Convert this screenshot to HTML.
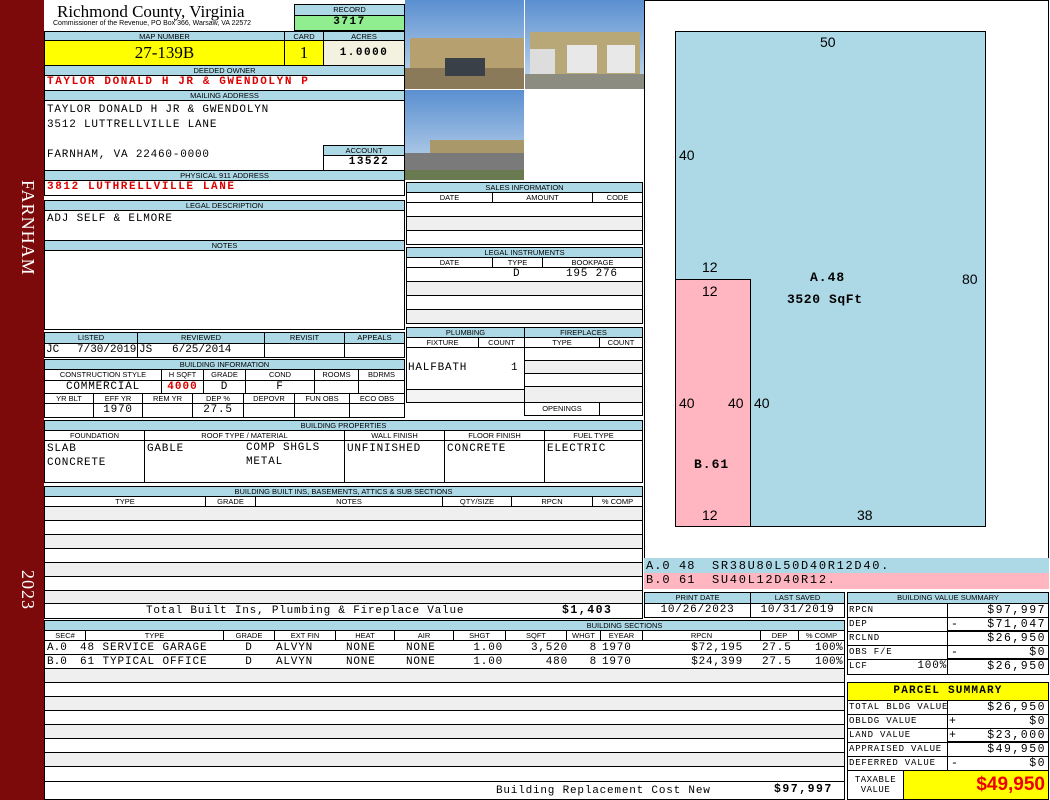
<!DOCTYPE html>
<html><head><meta charset="utf-8"><style>
*{box-sizing:border-box;margin:0;padding:0}
body{width:1050px;height:800px;position:relative;background:#fff;overflow:hidden;font-family:"Liberation Sans",sans-serif}
div{position:absolute}
.bd{border:1px solid #000}
.b{background:#add8e6;border:1px solid #000;font-size:7.5px;text-align:center;line-height:9px;color:#000;white-space:nowrap;overflow:hidden}
.h{border:1px solid #000;font-size:7.5px;text-align:center;line-height:9px;white-space:nowrap;overflow:hidden}
.m{font-family:"Liberation Mono",monospace;font-size:11px;white-space:nowrap;line-height:13px;letter-spacing:0.8px}
.r{color:#d00;font-weight:bold;letter-spacing:1.6px}
.g{background:#efefef}
.c{text-align:center}
.rt{text-align:right}
.v{font-size:11.5px;letter-spacing:1.5px}
</style></head><body>
<div style="left:0;top:0;width:44px;height:800px;background:#7d0a0a"></div>
<div style="left:8px;top:180px;width:30px;height:120px;color:#fff;font-family:'Liberation Serif',serif;font-size:18px;writing-mode:vertical-rl;letter-spacing:1px">FARNHAM</div>
<div style="left:8px;top:570px;width:30px;height:60px;color:#fff;font-family:'Liberation Serif',serif;font-size:18px;writing-mode:vertical-rl;letter-spacing:1px">2023</div>

<div style="left:57px;top:2px;font-family:'Liberation Serif',serif;font-size:17px;line-height:20px">Richmond County, Virginia</div>
<div style="left:53px;top:20px;font-size:7px;line-height:8px;white-space:nowrap">Commissioner of the Revenue, PO Box 366, Warsaw, VA 22572</div>
<div class="b" style="left:294px;top:4px;width:111px;height:12px">RECORD</div>
<div class="m c bd" style="left:294px;top:15px;width:111px;height:16px;background:#90ee90;font-weight:bold;letter-spacing:1.5px">3717</div>
<div class="b" style="left:44px;top:31px;width:241px;height:10px">MAP NUMBER</div>
<div class="b" style="left:284px;top:31px;width:40px;height:10px">CARD</div>
<div class="b" style="left:323px;top:31px;width:82px;height:10px">ACRES</div>
<div class="bd c" style="left:44px;top:40px;width:241px;height:26px;background:#ffff00;font-family:'Liberation Serif',serif;font-size:17px;line-height:24px">27-139B</div>
<div class="bd c" style="left:284px;top:40px;width:40px;height:26px;background:#ffff00;font-family:'Liberation Serif',serif;font-size:17px;line-height:24px">1</div>
<div class="bd m c" style="left:323px;top:40px;width:82px;height:26px;background:#f3f1e0;font-weight:bold;line-height:24px;letter-spacing:1.5px">1.0000</div>
<div class="b" style="left:44px;top:65px;width:361px;height:11px">DEEDED OWNER</div>
<div class="bd m r" style="left:44px;top:75px;width:361px;height:16px;padding-left:2px">TAYLOR DONALD H JR &amp; GWENDOLYN P</div>
<div class="b" style="left:44px;top:90px;width:361px;height:11px">MAILING ADDRESS</div>
<div class="bd m" style="left:44px;top:100px;width:361px;height:71px;padding:2px 2px;line-height:15px">TAYLOR DONALD H JR &amp; GWENDOLYN<br>3512 LUTTRELLVILLE LANE<br><br>FARNHAM, VA 22460-0000</div>
<div class="b" style="left:323px;top:145px;width:82px;height:11px">ACCOUNT</div>
<div class="bd m c" style="left:323px;top:155px;width:82px;height:16px;font-weight:bold;padding-left:10px;letter-spacing:1.5px">13522</div>
<div class="b" style="left:44px;top:170px;width:361px;height:11px">PHYSICAL 911 ADDRESS</div>
<div class="bd m r" style="left:44px;top:180px;width:361px;height:16px;padding-left:2px">3812 LUTHRELLVILLE LANE</div>
<div class="b" style="left:44px;top:200px;width:361px;height:11px">LEGAL DESCRIPTION</div>
<div class="bd m" style="left:44px;top:210px;width:361px;height:31px;padding:2px">ADJ SELF &amp; ELMORE</div>
<div class="b" style="left:44px;top:240px;width:361px;height:11px">NOTES</div>
<div class="bd" style="left:44px;top:250px;width:361px;height:80px"></div>

<div class="b" style="left:44px;top:332px;width:94px;height:12px">LISTED</div>
<div class="b" style="left:137px;top:332px;width:128px;height:12px">REVIEWED</div>
<div class="b" style="left:264px;top:332px;width:81px;height:12px">REVISIT</div>
<div class="b" style="left:344px;top:332px;width:61px;height:12px">APPEALS</div>
<div class="bd" style="left:44px;top:343px;width:94px;height:15px"></div>
<div class="bd" style="left:137px;top:343px;width:128px;height:15px"></div>
<div class="m" style="left:46px;top:344px;letter-spacing:0">JC</div>
<div class="m" style="left:77px;top:344px;letter-spacing:0">7/30/2019</div>
<div class="m" style="left:139px;top:344px;letter-spacing:0">JS</div>
<div class="m" style="left:172px;top:344px;letter-spacing:0">6/25/2014</div>
<div class="bd" style="left:264px;top:343px;width:81px;height:15px"></div>
<div class="bd" style="left:344px;top:343px;width:61px;height:15px"></div>
<div class="b" style="left:44px;top:359px;width:361px;height:11px">BUILDING INFORMATION</div>
<div class="h" style="left:44px;top:369px;width:118px;height:12px">CONSTRUCTION STYLE</div>
<div class="h" style="left:161px;top:369px;width:43px;height:12px">H SQFT</div>
<div class="h" style="left:203px;top:369px;width:43px;height:12px">GRADE</div>
<div class="h" style="left:245px;top:369px;width:70px;height:12px">COND</div>
<div class="h" style="left:314px;top:369px;width:45px;height:12px">ROOMS</div>
<div class="h" style="left:358px;top:369px;width:47px;height:12px">BDRMS</div>
<div class="bd m c" style="left:44px;top:380px;width:118px;height:14px">COMMERCIAL</div>
<div class="bd m c r" style="left:161px;top:380px;width:43px;height:14px;letter-spacing:1px">4000</div>
<div class="bd m c" style="left:203px;top:380px;width:43px;height:14px">D</div>
<div class="bd m c" style="left:245px;top:380px;width:70px;height:14px">F</div>
<div class="bd" style="left:314px;top:380px;width:45px;height:14px"></div>
<div class="bd" style="left:358px;top:380px;width:47px;height:14px"></div>
<div class="h" style="left:44px;top:393px;width:50px;height:11px">YR BLT</div>
<div class="h" style="left:93px;top:393px;width:50px;height:11px">EFF YR</div>
<div class="h" style="left:142px;top:393px;width:51px;height:11px">REM YR</div>
<div class="h" style="left:192px;top:393px;width:52px;height:11px">DEP %</div>
<div class="h" style="left:243px;top:393px;width:52px;height:11px">DEPOVR</div>
<div class="h" style="left:294px;top:393px;width:56px;height:11px">FUN OBS</div>
<div class="h" style="left:349px;top:393px;width:56px;height:11px">ECO OBS</div>
<div class="bd" style="left:44px;top:403px;width:50px;height:15px"></div>
<div class="bd m c" style="left:93px;top:403px;width:50px;height:15px">1970</div>
<div class="bd" style="left:142px;top:403px;width:51px;height:15px"></div>
<div class="bd m c" style="left:192px;top:403px;width:52px;height:15px">27.5</div>
<div class="bd" style="left:243px;top:403px;width:52px;height:15px"></div>
<div class="bd" style="left:294px;top:403px;width:56px;height:15px"></div>
<div class="bd" style="left:349px;top:403px;width:56px;height:15px"></div>

<svg style="position:absolute;left:405px;top:0" width="240" height="181">
<defs><linearGradient id="sk" x1="0" y1="0" x2="0" y2="1"><stop offset="0" stop-color="#5a8fd0"/><stop offset="1" stop-color="#c8dcee"/></linearGradient></defs>
<rect x="0" y="0" width="119" height="89" fill="url(#sk)"/>
<rect x="5" y="38" width="114" height="32" fill="#b7a070"/><rect x="0" y="68" width="119" height="21" fill="#8a7a5a"/><rect x="40" y="58" width="40" height="18" fill="#3a4048"/>
<rect x="120" y="0" width="119" height="89" fill="url(#sk)"/>
<rect x="125" y="32" width="110" height="42" fill="#b8a878"/><rect x="162" y="45" width="30" height="28" fill="#e8e8e8"/><rect x="202" y="45" width="28" height="28" fill="#e8e8e8"/><rect x="125" y="49" width="25" height="30" fill="#ddd"/><rect x="120" y="74" width="119" height="15" fill="#8c8c80"/>
<rect x="0" y="90" width="119" height="90" fill="url(#sk)"/>
<rect x="25" y="140" width="94" height="18" fill="#a8986a"/><rect x="0" y="153" width="119" height="20" fill="#7a7a7a"/><rect x="0" y="170" width="119" height="10" fill="#6a7a50"/>
</svg>

<div class="b" style="left:406px;top:182px;width:237px;height:11px">SALES INFORMATION</div>
<div class="h" style="left:406px;top:192px;width:87px;height:11px">DATE</div>
<div class="h" style="left:492px;top:192px;width:101px;height:11px">AMOUNT</div>
<div class="h" style="left:592px;top:192px;width:51px;height:11px">CODE</div>
<div class="bd" style="left:406px;top:202px;width:237px;height:15px"></div>
<div class="bd g" style="left:406px;top:216px;width:237px;height:15px"></div>
<div class="bd" style="left:406px;top:230px;width:237px;height:15px"></div>
<div class="b" style="left:406px;top:247px;width:237px;height:11px">LEGAL INSTRUMENTS</div>
<div class="h" style="left:406px;top:257px;width:87px;height:11px">DATE</div>
<div class="h" style="left:492px;top:257px;width:51px;height:11px">TYPE</div>
<div class="h" style="left:542px;top:257px;width:101px;height:11px">BOOKPAGE</div>
<div class="bd" style="left:406px;top:267px;width:237px;height:15px"></div>
<div class="m" style="left:513px;top:268px">D</div>
<div class="m" style="left:566px;top:268px">195 276</div>
<div class="bd g" style="left:406px;top:281px;width:237px;height:15px"></div>
<div class="bd" style="left:406px;top:295px;width:237px;height:15px"></div>
<div class="bd g" style="left:406px;top:309px;width:237px;height:15px"></div>

<div class="b" style="left:406px;top:327px;width:119px;height:11px">PLUMBING</div>
<div class="b" style="left:524px;top:327px;width:119px;height:11px">FIREPLACES</div>
<div class="h" style="left:406px;top:337px;width:73px;height:11px">FIXTURE</div>
<div class="h" style="left:478px;top:337px;width:47px;height:11px">COUNT</div>
<div class="h" style="left:524px;top:337px;width:76px;height:11px">TYPE</div>
<div class="h" style="left:599px;top:337px;width:44px;height:11px">COUNT</div>
<div class="bd" style="left:406px;top:347px;width:119px;height:56px"></div>
<div class="m" style="left:408px;top:362px">HALFBATH</div>
<div class="m" style="left:511px;top:362px">1</div>
<div class="bd" style="left:406px;top:389px;width:119px;height:14px;background:#f3f3f3"></div>
<div class="bd" style="left:524px;top:347px;width:119px;height:14px"></div>
<div class="bd g" style="left:524px;top:360px;width:119px;height:14px"></div>
<div class="bd" style="left:524px;top:373px;width:119px;height:14px"></div>
<div class="bd g" style="left:524px;top:386px;width:119px;height:17px"></div>
<div class="h" style="left:524px;top:402px;width:76px;height:14px;line-height:12px">OPENINGS</div>
<div class="bd" style="left:599px;top:402px;width:44px;height:14px"></div>

<div class="b" style="left:44px;top:420px;width:599px;height:11px">BUILDING PROPERTIES</div>
<div class="h" style="left:44px;top:430px;width:101px;height:11px">FOUNDATION</div>
<div class="h" style="left:144px;top:430px;width:201px;height:11px">ROOF TYPE / MATERIAL</div>
<div class="h" style="left:344px;top:430px;width:101px;height:11px">WALL FINISH</div>
<div class="h" style="left:444px;top:430px;width:101px;height:11px">FLOOR FINISH</div>
<div class="h" style="left:544px;top:430px;width:99px;height:11px">FUEL TYPE</div>
<div class="bd m" style="left:44px;top:440px;width:101px;height:43px;padding:1px 2px;line-height:14px">SLAB<br>CONCRETE</div>
<div class="bd m" style="left:144px;top:440px;width:201px;height:43px;padding:1px 2px;line-height:14px">GABLE</div>
<div class="m" style="left:246px;top:441px;line-height:14px">COMP SHGLS<br>METAL</div>
<div class="bd m" style="left:344px;top:440px;width:101px;height:43px;padding:1px 2px;line-height:14px">UNFINISHED</div>
<div class="bd m" style="left:444px;top:440px;width:101px;height:43px;padding:1px 2px;line-height:14px">CONCRETE</div>
<div class="bd m" style="left:544px;top:440px;width:99px;height:43px;padding:1px 2px;line-height:14px">ELECTRIC</div>

<div class="b" style="left:44px;top:486px;width:599px;height:11px">BUILDING BUILT INS, BASEMENTS, ATTICS &amp; SUB SECTIONS</div>
<div class="h" style="left:44px;top:496px;width:162px;height:11px">TYPE</div>
<div class="h" style="left:205px;top:496px;width:51px;height:11px">GRADE</div>
<div class="h" style="left:255px;top:496px;width:188px;height:11px">NOTES</div>
<div class="h" style="left:442px;top:496px;width:70px;height:11px">QTY/SIZE</div>
<div class="h" style="left:511px;top:496px;width:82px;height:11px">RPCN</div>
<div class="h" style="left:592px;top:496px;width:51px;height:11px">% COMP</div>
<div class="bd g" style="left:44px;top:506px;width:599px;height:15px"></div>
<div class="bd" style="left:44px;top:520px;width:599px;height:15px"></div>
<div class="bd g" style="left:44px;top:534px;width:599px;height:15px"></div>
<div class="bd" style="left:44px;top:548px;width:599px;height:15px"></div>
<div class="bd g" style="left:44px;top:562px;width:599px;height:15px"></div>
<div class="bd" style="left:44px;top:576px;width:599px;height:15px"></div>
<div class="bd g" style="left:44px;top:590px;width:599px;height:14px"></div>
<div class="bd m" style="left:44px;top:603px;width:599px;height:16px;line-height:15px;padding-left:101px">Total Built Ins, Plumbing &amp; Fireplace Value</div>
<div class="m v" style="left:562px;top:604px;font-weight:bold">$1,403</div>

<div class="b" style="left:44px;top:620px;width:801px;height:11px;text-indent:360px">BUILDING SECTIONS</div>
<div class="h" style="left:44px;top:630px;width:42px;height:11px">SEC#</div>
<div class="h" style="left:85px;top:630px;width:139px;height:11px">TYPE</div>
<div class="h" style="left:223px;top:630px;width:52px;height:11px">GRADE</div>
<div class="h" style="left:274px;top:630px;width:62px;height:11px">EXT FIN</div>
<div class="h" style="left:335px;top:630px;width:60px;height:11px">HEAT</div>
<div class="h" style="left:394px;top:630px;width:60px;height:11px">AIR</div>
<div class="h" style="left:453px;top:630px;width:53px;height:11px">SHGT</div>
<div class="h" style="left:505px;top:630px;width:62px;height:11px">SQFT</div>
<div class="h" style="left:566px;top:630px;width:35px;height:11px">WHGT</div>
<div class="h" style="left:600px;top:630px;width:43px;height:11px">EYEAR</div>
<div class="h" style="left:642px;top:630px;width:119px;height:11px">RPCN</div>
<div class="h" style="left:760px;top:630px;width:39px;height:11px">DEP</div>
<div class="h" style="left:798px;top:630px;width:47px;height:11px">% COMP</div>
<div class="bd" style="left:44px;top:640px;width:801px;height:15px"></div>
<div class="bd" style="left:44px;top:654px;width:801px;height:15px"></div>
<div class="m" style="left:47px;top:641px;line-height:14px;letter-spacing:0">A.0<br>B.0</div>
<div class="m" style="left:80px;top:641px;line-height:14px;letter-spacing:0.9px">48 SERVICE GARAGE<br>61 TYPICAL OFFICE</div>
<div class="m c" style="left:223px;top:641px;width:52px;line-height:14px">D<br>D</div>
<div class="m" style="left:276px;top:641px;line-height:14px">ALVYN<br>ALVYN</div>
<div class="m" style="left:346px;top:641px;line-height:14px">NONE<br>NONE</div>
<div class="m" style="left:406px;top:641px;line-height:14px">NONE<br>NONE</div>
<div class="m rt" style="left:453px;top:641px;width:50px;line-height:14px">1.00<br>1.00</div>
<div class="m rt" style="left:505px;top:641px;width:63px;line-height:14px">3,520<br>480</div>
<div class="m rt" style="left:566px;top:641px;width:31px;line-height:14px">8<br>8</div>
<div class="m" style="left:602px;top:641px;line-height:14px">1970<br>1970</div>
<div class="m rt" style="left:642px;top:641px;width:101px;line-height:14px">$72,195<br>$24,399</div>
<div class="m" style="left:762px;top:641px;line-height:14px">27.5<br>27.5</div>
<div class="m rt" style="left:791px;top:641px;width:52px;line-height:14px;letter-spacing:0.4px">100%<br>100%</div>
<div class="bd g" style="left:44px;top:668px;width:801px;height:15px"></div>
<div class="bd" style="left:44px;top:682px;width:801px;height:15px"></div>
<div class="bd g" style="left:44px;top:696px;width:801px;height:15px"></div>
<div class="bd" style="left:44px;top:710px;width:801px;height:15px"></div>
<div class="bd g" style="left:44px;top:724px;width:801px;height:15px"></div>
<div class="bd" style="left:44px;top:738px;width:801px;height:15px"></div>
<div class="bd g" style="left:44px;top:752px;width:801px;height:15px"></div>
<div class="bd" style="left:44px;top:766px;width:801px;height:16px"></div>
<div class="bd m" style="left:44px;top:781px;width:801px;height:19px;line-height:18px;padding-left:451px">Building Replacement Cost New</div>
<div class="m v" style="left:774px;top:783px;font-weight:bold">$97,997</div>

<div class="bd" style="left:644px;top:0;width:405px;height:559px"></div>
<div style="left:675px;top:31px;width:311px;height:496px;background:#add8e6;border:1px solid #000"></div>
<div style="left:675px;top:279px;width:76px;height:248px;background:#ffb6c1;border:1px solid #000"></div>
<div style="left:820px;top:34px;font-size:14px">50</div>
<div style="left:679px;top:147px;font-size:14px">40</div>
<div style="left:962px;top:271px;font-size:14px">80</div>
<div style="left:702px;top:259px;font-size:14px">12</div>
<div style="left:702px;top:283px;font-size:14px">12</div>
<div style="left:679px;top:395px;font-size:14px">40</div>
<div style="left:728px;top:395px;font-size:14px">40</div>
<div style="left:754px;top:395px;font-size:14px">40</div>
<div style="left:702px;top:507px;font-size:14px">12</div>
<div style="left:857px;top:507px;font-size:14px">38</div>
<div class="m" style="left:810px;top:271px;font-weight:bold;font-size:13px;letter-spacing:1px">A.48</div>
<div class="m" style="left:787px;top:293px;font-weight:bold;font-size:13px;letter-spacing:0.6px">3520 SqFt</div>
<div class="m" style="left:694px;top:458px;font-weight:bold;font-size:13px;letter-spacing:1px">B.61</div>
<div style="left:644px;top:558px;width:405px;height:16px;background:#add8e6"></div>
<div style="left:644px;top:573px;width:405px;height:16px;background:#ffb6c1"></div>
<div class="m" style="left:646px;top:559px;font-size:12px;letter-spacing:1px;line-height:14px">A.0<br>B.0</div>
<div class="m" style="left:679px;top:559px;font-size:12px;letter-spacing:1px;line-height:14px">48<br>61</div>
<div class="m" style="left:712px;top:559px;font-size:12px;letter-spacing:1.7px;line-height:14px">SR38U80L50D40R12D40.<br>SU40L12D40R12.</div>

<div class="b" style="left:644px;top:592px;width:107px;height:12px">PRINT DATE</div>
<div class="b" style="left:750px;top:592px;width:95px;height:12px">LAST SAVED</div>
<div class="bd m c" style="left:644px;top:603px;width:107px;height:15px">10/26/2023</div>
<div class="bd m c" style="left:750px;top:603px;width:95px;height:15px">10/31/2019</div>

<div class="b" style="left:847px;top:592px;width:202px;height:12px">BUILDING VALUE SUMMARY</div>
<div class="bd m" style="left:847px;top:603px;width:101px;height:15px;font-size:9px;padding-left:1px">RPCN</div>
<div class="bd m rt v" style="left:947px;top:603px;width:102px;height:15px;padding-right:2px">$97,997</div>
<div class="bd m" style="left:847px;top:617px;width:101px;height:15px;font-size:9px;padding-left:1px">DEP</div>
<div class="bd m rt v" style="left:947px;top:617px;width:102px;height:15px;padding-right:2px;border-bottom-width:2px"><span style="float:left;padding-left:3px">-</span>$71,047</div>
<div class="bd m" style="left:847px;top:631px;width:101px;height:15px;font-size:9px;padding-left:1px">RCLND</div>
<div class="bd m rt v" style="left:947px;top:631px;width:102px;height:15px;padding-right:2px">$26,950</div>
<div class="bd m" style="left:847px;top:645px;width:101px;height:15px;font-size:9px;padding-left:1px">OBS F/E</div>
<div class="bd m rt v" style="left:947px;top:645px;width:102px;height:15px;padding-right:2px;border-bottom-width:2px"><span style="float:left;padding-left:3px">-</span>$0</div>
<div class="bd m" style="left:847px;top:659px;width:101px;height:16px;font-size:9px;padding-left:1px">LCF<span style="float:right;font-size:11px">100%</span></div>
<div class="bd m rt v" style="left:947px;top:659px;width:102px;height:16px;padding-right:2px">$26,950</div>

<div class="bd m c" style="left:847px;top:682px;width:202px;height:19px;background:#ffff00;font-weight:bold;line-height:17px;font-size:11px;letter-spacing:1.2px">PARCEL SUMMARY</div>
<div class="bd m" style="left:847px;top:700px;width:101px;height:15px;font-size:9px;padding-left:1px">TOTAL BLDG VALUE</div>
<div class="bd m rt v" style="left:947px;top:700px;width:102px;height:15px;padding-right:2px">$26,950</div>
<div class="bd m" style="left:847px;top:714px;width:101px;height:15px;font-size:9px;padding-left:1px">OBLDG VALUE</div>
<div class="bd m rt v" style="left:947px;top:714px;width:102px;height:15px;padding-right:2px"><span style="float:left;padding-left:1px">+</span>$0</div>
<div class="bd m" style="left:847px;top:728px;width:101px;height:15px;font-size:9px;padding-left:1px">LAND VALUE</div>
<div class="bd m rt v" style="left:947px;top:728px;width:102px;height:15px;padding-right:2px;border-bottom-width:2px"><span style="float:left;padding-left:1px">+</span>$23,000</div>
<div class="bd m" style="left:847px;top:742px;width:101px;height:15px;font-size:9px;padding-left:1px">APPRAISED VALUE</div>
<div class="bd m rt v" style="left:947px;top:742px;width:102px;height:15px;padding-right:2px">$49,950</div>
<div class="bd m" style="left:847px;top:756px;width:101px;height:15px;font-size:9px;padding-left:1px">DEFERRED VALUE</div>
<div class="bd m rt v" style="left:947px;top:756px;width:102px;height:15px;padding-right:2px"><span style="float:left;padding-left:3px">-</span>$0</div>
<div class="bd m c" style="left:847px;top:770px;width:57px;height:30px;font-size:9px;line-height:10px;padding-top:4px;letter-spacing:0.5px">TAXABLE<br>VALUE</div>
<div class="bd rt" style="left:903px;top:770px;width:146px;height:30px;background:#ffff00;color:#e00;font-weight:bold;font-size:19px;line-height:28px;padding-right:3px">$49,950</div>
</body></html>
